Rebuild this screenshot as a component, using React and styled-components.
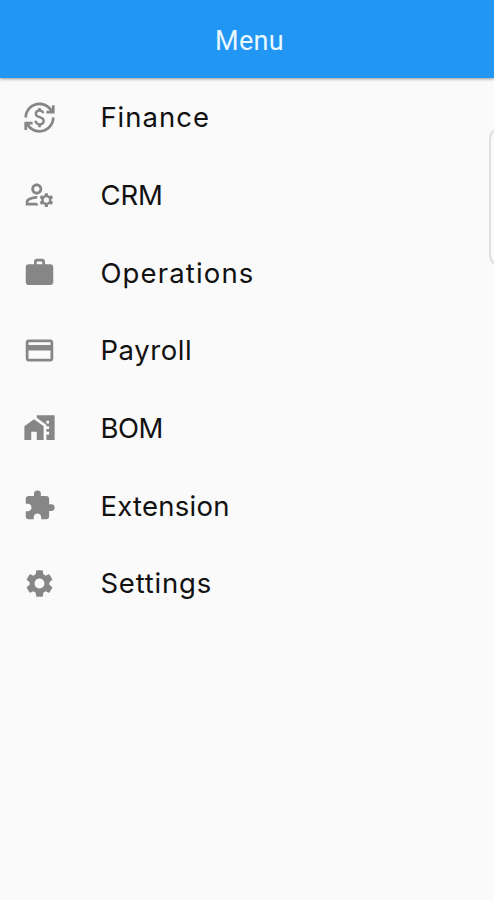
import React from "react";
import styled, { createGlobalStyle } from "styled-components";
import {
  MdCurrencyExchange,
  MdOutlineManageAccounts,
  MdWork,
  MdPayment,
  MdHomeWork,
  MdExtension,
  MdSettings,
} from "react-icons/md";

const GlobalStyle = createGlobalStyle`
  body {
    margin: 0;
    background-color: #fafafa;
  }
`;

const Page = styled.div`
  position: relative;
  min-height: 900px;
  overflow: hidden;
  background-color: #fafafa;
`;

const Header = styled.header`
  display: flex;
  align-items: center;
  justify-content: center;
  height: 78px;
  padding: 3px 0 0 5px;
  box-sizing: border-box;
  background-color: #2196f3;
  box-shadow: 0 1px 3px rgba(0, 0, 0, 0.4);
`;

const Title = styled.h1`
  margin: 0;
  color: #e9f7ff;
  font-family: Roboto, sans-serif;
  font-size: 27px;
  font-weight: 400;
  line-height: 32px;
  letter-spacing: 0.3px;
`;

const MenuList = styled.ul`
  margin: 0;
  padding: 0.3px 0 0;
  list-style: none;
`;

const MenuItem = styled.li`
  display: flex;
  align-items: center;
  height: 77.7px;
  padding-left: 22.8px;
  color: #868686;

  svg {
    flex: none;
    width: 33px;
    height: 33px;
  }
`;

const Label = styled.span`
  margin-left: 44.6px;
  color: #111;
  font-family: Inter, sans-serif;
  font-size: 27.5px;
  font-weight: 400;
  line-height: 36px;
  letter-spacing: ${({ $spacing }) => $spacing}px;
`;

const SidePanel = styled.div`
  position: absolute;
  top: 127px;
  left: 489px;
  width: 40px;
  height: 140px;
  box-sizing: border-box;
  border: 2px solid #e0e0e0;
  border-radius: 12px;
`;

const items = [
  { label: "Finance", icon: MdCurrencyExchange, spacing: 1 },
  { label: "CRM", icon: MdOutlineManageAccounts, spacing: -0.1 },
  { label: "Operations", icon: MdWork, spacing: 1.15 },
  { label: "Payroll", icon: MdPayment, spacing: 0.6 },
  { label: "BOM", icon: MdHomeWork, spacing: -0.5 },
  { label: "Extension", icon: MdExtension, spacing: 0.25 },
  { label: "Settings", icon: MdSettings, spacing: 0.8 },
];

const App = () => {
  return (
    <>
      <GlobalStyle />
      <Page>
        <Header>
          <Title>Menu</Title>
        </Header>
        <MenuList>
          {items.map(({ label, icon: Icon, spacing }) => (
            <MenuItem key={label}>
              <Icon />
              <Label $spacing={spacing}>{label}</Label>
            </MenuItem>
          ))}
        </MenuList>
        <SidePanel />
      </Page>
    </>
  );
};

export default App;
